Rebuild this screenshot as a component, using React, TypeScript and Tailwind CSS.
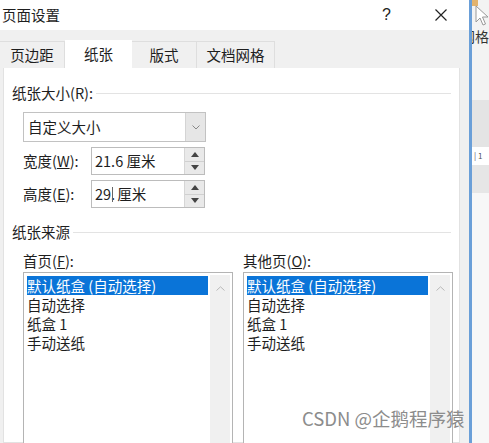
import React from "react";

const font = { fontFamily: '"Noto Sans CJK SC", "Noto Sans", sans-serif' };

function SectionHeader({ title }: { title: string }) {
  return (
    <div className="flex items-center h-[20px] pl-[8px] pr-[8px] shrink-0">
      <span className="text-[14.5px] leading-[20px] text-[#1e1e1e] whitespace-nowrap">{title}</span>
      <div className="flex-1 h-px bg-[#e3e3e3] ml-[3px]" />
    </div>
  );
}

function Spinner() {
  return (
    <div className="w-[20px] flex flex-col bg-[#e9e9e9] border-l border-[#d6d6d6]">
      <div className="flex-1 flex items-center justify-center border-b border-[#d0d0d0]">
        <svg width="8" height="5" viewBox="0 0 8 5"><path d="M4 0L8 5H0Z" fill="#444" /></svg>
      </div>
      <div className="flex-1 flex items-center justify-center">
        <svg width="8" height="5" viewBox="0 0 8 5"><path d="M0 0H8L4 5Z" fill="#444" /></svg>
      </div>
    </div>
  );
}

function NumberField({ label, children }: { label: React.ReactNode; children: React.ReactNode }) {
  return (
    <div className="flex items-center h-[28px] ml-[19px] mt-[5px] shrink-0">
      <div className="w-[68px] text-[14.5px] leading-[20px] text-[#1e1e1e]">{label}</div>
      <div className="w-[114px] h-full flex border border-[#bcbcbc] bg-white">
        <div className="flex-1 flex items-center pl-[3px] text-[14.5px] leading-[20px] text-[#1e1e1e]">{children}</div>
        <Spinner />
      </div>
    </div>
  );
}

const items = ["默认纸盒 (自动选择)", "自动选择", "纸盒 1", "手动送纸"];

function ListBox({ label }: { label: React.ReactNode }) {
  return (
    <div className="w-[210px] flex flex-col">
      <div className="h-[18px] flex items-center text-[14.5px] leading-[18px] text-[#1e1e1e]">{label}</div>
      <div className="mt-[2px] h-[190px] shrink-0 border border-[#b4b4b4] bg-white p-[2px] flex">
        <div className="flex-1 flex flex-col pl-px pt-px">
          {items.map((t, i) => (
            <div
              key={t}
              className={`h-[19px] flex items-center text-[14.5px] leading-[19px] whitespace-nowrap ${
                i === 0 ? "bg-[#0a74d8] text-white" : "text-[#1e1e1e]"
              }`}
            >
              {t}
            </div>
          ))}
        </div>
        <div className="w-[20px] ml-[2px] bg-[#f0f0f0] flex flex-col items-center justify-between py-[11px]">
          <svg width="9" height="5" viewBox="0 0 9 5"><path d="M0.5 4.5L4.5 0.8L8.5 4.5" fill="none" stroke="#b8b8b8" /></svg>
          <svg width="9" height="5" viewBox="0 0 9 5"><path d="M0.5 0.5L4.5 4.2L8.5 0.5" fill="none" stroke="#b8b8b8" /></svg>
        </div>
      </div>
    </div>
  );
}

function Tab({ label, width, active }: { label: string; width: number; active?: boolean }) {
  return (
    <div
      style={{ width }}
      className={`flex items-center justify-center text-[14.5px] leading-[20px] text-[#1e1e1e] ${
        active ? "h-[28px] bg-white" : "h-[27px] bg-[#f0f0f0] border-t border-r border-[#dedede]"
      }`}
    >
      {label}
    </div>
  );
}

export default function App() {
  return (
    <div className="relative w-[489px] h-[443px] overflow-hidden flex bg-white" style={font}>
      {/* dialog */}
      <div className="w-[469px] shrink-0 h-full flex flex-col bg-[#f0f0f0] overflow-hidden">
        <div className="h-[30px] shrink-0 bg-white flex items-center pl-[2px]">
          <span className="text-[14.5px] leading-[20px] text-[#1e1e1e]">页面设置</span>
          <span className="ml-auto text-[16px] leading-[20px] text-[#222] mr-[44px]" style={{ fontFamily: '"Liberation Sans", sans-serif' }}>?</span>
          <svg className="mr-[22px]" width="12" height="12" viewBox="0 0 12 12">
            <path d="M0.5 0.5L11.5 11.5M11.5 0.5L0.5 11.5" stroke="#222" strokeWidth="1.2" />
          </svg>
        </div>
        <div className="flex items-end h-[28px] mt-[10px] shrink-0">
          <Tab label="页边距" width={65} />
          <Tab label="纸张" width={67} active />
          <Tab label="版式" width={65} />
          <Tab label="文档网格" width={78} />
        </div>
        <div className="flex-1 min-h-0 ml-[3px] w-[457px] bg-white border border-t-0 border-[#e2e2e2] flex flex-col">
          <div className="mt-[15px] shrink-0">
            <SectionHeader title="纸张大小(R):" />
          </div>
          <div className="mt-[9px] ml-[19px] w-[183px] h-[30px] shrink-0 flex border border-[#c2c2c2] bg-white">
            <div className="flex-1 flex items-center pl-[4px] text-[14.5px] leading-[20px] text-[#1e1e1e]">自定义大小</div>
            <div className="w-[20px] bg-[#e6e6e6] border-l border-[#d4d4d4] flex items-center justify-center">
              <svg width="8" height="5" viewBox="0 0 8 5"><path d="M0.5 0.5L4 4L7.5 0.5" fill="none" stroke="#888" /></svg>
            </div>
          </div>
          <NumberField label={<>宽度(<span className="underline">W</span>):</>}>21.6 厘米</NumberField>
          <NumberField label={<>高度(<span className="underline">E</span>):</>}>
            29.<span className="inline-block w-px h-[15px] bg-[#666] ml-[-3px] mr-[4px]" />厘米
          </NumberField>
          <div className="mt-[14px] shrink-0">
            <SectionHeader title="纸张来源" />
          </div>
          <div className="mt-[10px] ml-[19px] flex gap-[10px] shrink-0">
            <ListBox label={<>首页(<span className="underline">F</span>):</>} />
            <ListBox label={<>其他页(<span className="underline">O</span>):</>} />
          </div>
        </div>
      </div>
      {/* window border */}
      <div className="w-[3px] shrink-0 h-full bg-[#6a9fd8]" />
      {/* background app */}
      <div className="flex-1 min-w-0 h-full flex flex-col bg-[#f7f7f7]">
        <div className="h-[100px] shrink-0 bg-[#f3f3f3] flex flex-col">
          <div className="h-[6px] w-[6px] bg-[#e2b36e]" />
          <div className="mt-[22px] flex justify-end overflow-hidden whitespace-nowrap text-[14px] leading-[16px] text-[#333]">网格</div>
        </div>
        <div className="h-[47px] shrink-0 bg-[#e4e4e4]" />
        <div className="h-[18px] shrink-0 bg-white flex items-center text-[8px] leading-none text-[#555] pl-[2px] overflow-hidden whitespace-nowrap">| 1</div>
        <div className="h-[28px] shrink-0 bg-[#e6e6e6]" />
      </div>
      {/* mouse cursor */}
      <svg className="absolute left-[475px] top-[5px]" width="14" height="22" viewBox="0 0 14 22">
        <path d="M1 1V17L5 13L8 20L10.5 19L7.5 12H13Z" fill="white" stroke="#999" strokeWidth="1" />
      </svg>
      {/* watermark */}
      <div className="absolute left-[302px] top-[406px] text-[18.5px] leading-[24px] text-[#8c8c8c] whitespace-nowrap">
        CSDN @企鹅程序猿
      </div>
    </div>
  );
}
